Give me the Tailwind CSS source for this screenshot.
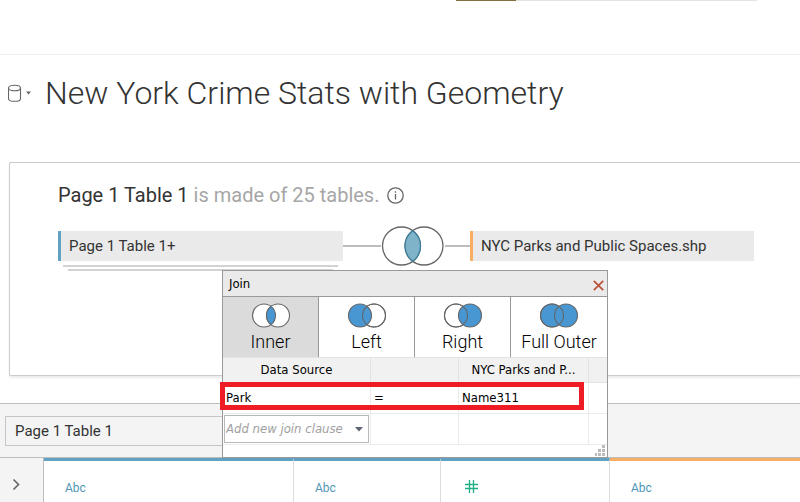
<!DOCTYPE html>
<html lang="en">
<head>
<meta charset="utf-8">
<meta name="viewport" content="width=device-width, initial-scale=1">
<title>New York Crime Stats with Geometry</title>
<script src="https://cdn.jsdelivr.net/npm/@tailwindcss/browser@4"></script>
</head>
<body class="min-h-screen flex flex-col bg-white overflow-hidden text-[#333] font-[Roboto,sans-serif]">
  <header class="h-[55px] border-b border-[#efefef] shrink-0">
    <div class="ml-[57%] mr-[43px] h-px bg-[#e4e4e4]"><div class="h-px w-1/5 bg-[#82713c]"></div></div>
  </header>

  <main class="flex flex-col grow">
    <div class="flex items-center h-[75px] pl-2 shrink-0">
      <button type="button" class="flex items-center gap-1" aria-label="Data source menu">
        <svg width="14" height="18" viewBox="0 0 14 18" fill="none" stroke="#666" stroke-width="1.1"><ellipse cx="6.5" cy="4" rx="6" ry="2.8"/><path d="M.5 4v10.500C.5 16 2 17 4 17.200h5c2-.2 3.500-1.200 3.500-2.700V4"/></svg>
        <svg width="5" height="4" viewBox="0 0 5 4"><path d="M0 .5h5L2.500 3.500z" fill="#666"/></svg>
      </button>
      <h1 class="ml-[14px] text-[32px] leading-10 font-light whitespace-nowrap">New York Crime Stats with Geometry</h1>
    </div>

    <section class="relative mt-8 ml-[9px] h-[214px] border border-r-0 border-[#ccc] rounded-l-xs pl-12 pt-5 shadow-[0_2px_2px_rgba(0,0,0,0.08)] shrink-0">
      <div class="flex items-center">
        <h2 class="text-xl leading-6 text-[#a6a6a6] whitespace-nowrap"><span class="text-[#333]">Page 1 Table 1</span> is made of 25 tables.</h2>
        <button type="button" class="ml-2" aria-label="More information">
          <svg width="17" height="17" viewBox="0 0 17 17" fill="none" stroke="#666" stroke-width="1.300"><circle cx="8.500" cy="8.500" r="7.700"/><path d="M8.500 7v5.500M8.500 4.300v1.400"/></svg>
        </button>
      </div>

      <div class="flex items-center mt-[19px] h-10">
        <div class="relative w-[285px] h-[30px] pl-2 flex items-center border-l-3 border-[#5fa2c4] bg-[#eaeaea] text-[15px]">Page 1 Table 1+
          <span class="absolute left-[2px] right-[5px] top-[34px] h-[2px] bg-[#d2d2d2]"></span>
          <span class="absolute left-[7px] right-[10px] top-[38px] h-[2px] bg-[#d2d2d2]"></span>
        </div>
        <div class="w-[38px] h-[2px] bg-[#bdbdbd]"></div>
        <button type="button" aria-label="Edit join">
          <svg width="64" height="40" viewBox="0 0 64 40" fill="none" stroke="#666" stroke-width="1.300"><circle cx="20.500" cy="20" r="19"/><circle cx="43" cy="20" r="19"/><path d="M31.750 4.700a19 19 0 0 1 0 30.600a19 19 0 0 1 0-30.600z" fill="#7fb3c9" stroke="#3a7f9c"/></svg>
        </button>
        <div class="w-[25px] h-[2px] bg-[#bdbdbd]"></div>
        <div class="w-[284px] h-[30px] pl-2 flex items-center border-l-3 border-[#f9ae66] bg-[#eaeaea] text-[15px] whitespace-nowrap">NYC Parks and Public Spaces.shp</div>
      </div>

      <div role="dialog" aria-labelledby="join-title" class="absolute left-[212px] top-[107px] z-10 w-[386px] h-[188px] flex flex-col border border-[#999] bg-white text-black font-[DejaVu_Sans_Condensed,Noto_Sans,sans-serif] text-[13px]">
        <div class="flex items-center justify-between h-[26px] pl-[6px] pr-[3px] bg-[#eaeaea] border-b border-[#999]">
          <span id="join-title">Join</span>
          <button type="button" aria-label="Close"><svg width="11" height="11" viewBox="0 0 11 11" class="mt-1" stroke="#b9503a" stroke-width="1.700"><path d="M.8.8l9.400 9.400M10.200.8L.8 10.200"/></svg></button>
        </div>
        <div class="grid grid-cols-4 h-[60px] font-[Roboto,sans-serif] text-lg leading-5 font-light">
          <button type="button" aria-pressed="true" class="flex flex-col items-center pt-[6px] gap-1 border-r border-[#999] bg-[#dbdbdb]">
            <svg width="40" height="25" viewBox="0 0 40 25" stroke="#666" stroke-width="1.100"><circle cx="13" cy="12.500" r="11.500" fill="#fff"/><circle cx="27" cy="12.500" r="11.500" fill="#fff"/><path d="M20 3.370a11.500 11.500 0 0 1 0 18.260a11.500 11.500 0 0 1 0-18.260z" fill="#4897d3"/></svg>Inner</button>
          <button type="button" class="flex flex-col items-center pt-[6px] gap-1 border-r border-[#999]">
            <svg width="40" height="25" viewBox="0 0 40 25" stroke="#666" stroke-width="1.100" fill="none"><circle cx="27" cy="12.500" r="11.500" fill="#fff"/><circle cx="13" cy="12.500" r="11.500" fill="#4897d3"/><circle cx="27" cy="12.500" r="11.500"/></svg>Left</button>
          <button type="button" class="flex flex-col items-center pt-[6px] gap-1 border-r border-[#999]">
            <svg width="40" height="25" viewBox="0 0 40 25" stroke="#666" stroke-width="1.100" fill="none"><circle cx="13" cy="12.500" r="11.500" fill="#fff"/><circle cx="27" cy="12.500" r="11.500" fill="#4897d3"/><circle cx="13" cy="12.500" r="11.500"/></svg>Right</button>
          <button type="button" class="flex flex-col items-center pt-[6px] gap-1 whitespace-nowrap">
            <svg width="40" height="25" viewBox="0 0 40 25" stroke="#666" stroke-width="1.100" fill="none"><circle cx="13" cy="12.500" r="11.500" fill="#4897d3"/><circle cx="27" cy="12.500" r="11.500" fill="#4897d3"/><circle cx="13" cy="12.500" r="11.500"/></svg>Full Outer</button>
        </div>
        <table class="w-full table-fixed border-separate border-spacing-0 text-left">
          <colgroup><col class="w-[148px]"><col class="w-[88px]"><col class="w-[130px]"><col></colgroup>
          <thead>
            <tr class="h-[26px] bg-[#f1f1f1]">
              <th scope="col" class="p-0 border-y border-r border-[#e3e3e3] font-normal text-center">Data Source</th>
              <th class="p-0 border-y border-r border-[#e3e3e3]"></th>
              <th scope="col" class="p-0 border-y border-r border-[#e3e3e3] font-normal text-center">NYC Parks and P...</th>
              <th class="p-0 border-y border-[#e3e3e3]"></th>
            </tr>
          </thead>
          <tbody>
            <tr class="h-[31px]">
              <td class="p-0 pl-[3px] border-b border-r border-[#ebebeb]">Park</td>
              <td class="p-0 pl-[3px] border-b border-r border-[#ebebeb]">=</td>
              <td class="p-0 pl-[3px] border-b border-r border-[#ebebeb]">Name311</td>
              <td class="p-0 border-b border-[#ebebeb]"></td>
            </tr>
            <tr class="h-[31px]">
              <td class="p-0 pl-px border-b border-r border-[#ebebeb]">
                <div class="relative w-[145px] h-7">
                  <select aria-label="Add new join clause" class="appearance-none block w-full h-full border border-[#b9b9b9] bg-white pl-px pr-5 text-[13px] italic text-[#a0a0a0]"><option>Add new join clause</option></select>
                  <svg class="absolute right-[6px] top-3 pointer-events-none" width="8" height="5" viewBox="0 0 8 5"><path d="M0 0h8L4 4.500z" fill="#5d6573"/></svg>
                </div>
              </td>
              <td class="p-0 border-b border-r border-[#ebebeb]"></td>
              <td class="p-0 border-b border-r border-[#ebebeb]"></td>
              <td class="p-0 border-b border-[#ebebeb]"></td>
            </tr>
          </tbody>
        </table>
        <svg class="absolute right-[2px] bottom-px" width="10" height="11" viewBox="0 0 10 11" fill="#bbb" shape-rendering="crispEdges"><path d="M7 0h3v3H7zM3 4h3v3H3zM7 4h3v3H7zM0 8h2v3H0zM3 8h3v3H3zM7 8h3v3H7z"/></svg>
        <div class="absolute -left-[3px] top-[111px] w-[364px] h-7 border-5 border-[#ee1c25] pointer-events-none"></div>
      </div>
    </section>

    <div class="mt-[27px] h-[55px] pt-3 pl-[5px] border-y border-[#bdbdbd] bg-[#f4f4f4] shrink-0">
      <button type="button" class="w-[260px] h-[30px] pl-[9px] text-left border border-[#c6c6c6] text-[15px]">Page 1 Table 1</button>
    </div>

    <div class="flex grow min-h-11 text-xs text-[#4f97b5]">
      <button type="button" aria-label="Expand" class="w-11 pl-3 pt-[20px] flex items-start border-r border-[#bdbdbd] bg-[#f4f4f4]">
        <svg width="9" height="13" viewBox="0 0 9 13" fill="none" stroke="#666" stroke-width="1.600"><path d="M1.500 1.500l5 5-5 5"/></svg>
      </button>
      <div class="w-[250px] pl-[21px] pt-[19px] border-t-3 border-t-[#5fa2c4] border-r border-r-[#dcdcdc]">Abc</div>
      <div class="w-[147px] pl-[21px] pt-[19px] border-t-3 border-t-[#5fa2c4] border-r border-r-[#dcdcdc]">Abc</div>
      <div class="w-[169px] pl-6 pt-[19px] border-t-3 border-t-[#5fa2c4] border-r border-r-[#dcdcdc]">
        <svg role="img" aria-label="Number" width="13" height="13" viewBox="0 0 13 13" stroke="#1fae86" stroke-width="1.300"><path d="M4.500 0v13M8.500 0v13M0 4.500h13M0 8.500h13"/></svg>
      </div>
      <div class="grow pl-[21px] pt-[19px] border-t-3 border-[#f9ae66]">Abc</div>
    </div>
  </main>
</body>
</html>
